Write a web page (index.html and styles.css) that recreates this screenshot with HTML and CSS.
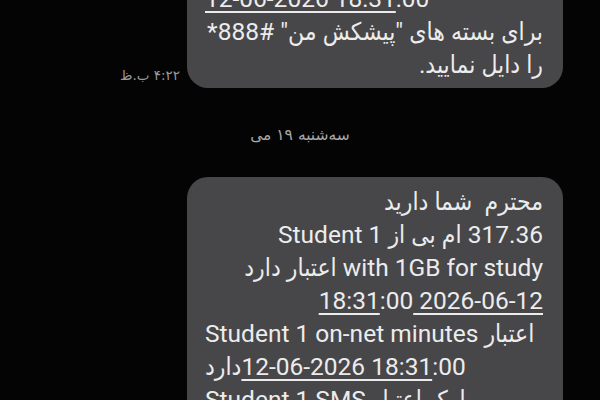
FILE: index.html
```html
<!DOCTYPE html>
<html lang="fa">
<head>
<meta charset="utf-8">
<link rel="stylesheet" href="styles.css">
</head>
<body>
<div class="chat">
  <div class="row">
    <span class="time" dir="rtl">۴:۲۲ ب.ظ</span>
    <div class="bubble first">
      <div class="line ltr"><span class="link">12-06-2026 18:31</span>:00</div>
      <div class="line rtl" dir="rtl">برای بسته های "پیشکش من" #888*</div>
      <div class="line rtl" dir="rtl">را دایل نمایید.</div>
    </div>
  </div>
  <div class="date" dir="rtl">سه‌شنبه ۱۹ می</div>
  <div class="row">
    <div class="bubble second">
      <div class="line rtl" dir="rtl">محترم&nbsp; شما دارید</div>
      <div class="line rtl" dir="rtl">317.36 ام بی از Student 1</div>
      <div class="line rtl" dir="rtl">with 1GB for study اعتبار دارد</div>
      <div class="line ltr end"><span class="link">18:31</span>:00<span class="link"> 2026-06-12</span></div>
      <div class="line ltr">Student 1 on-net minutes <bdi dir="rtl">اعتبار</bdi></div>
      <div class="line ltr"><bdi dir="rtl">دارد</bdi><span class="link">12-06-2026 18:31</span>:00</div>
      <div class="line ltr">Student 1 SMS <bdi dir="rtl">پیامک اعتبار</bdi></div>
    </div>
  </div>
</div>
</body>
</html>
```

FILE: styles.css
```css
html, body {
  margin: 0;
  padding: 0;
  background: #040404;
  width: 600px;
  height: 400px;
  overflow: hidden;
}

.chat {
  display: flex;
  flex-direction: column;
  font-family: Roboto, "DejaVu Sans Condensed", "DejaVu Sans", sans-serif;
  color: #ececec;
}

.row {
  display: flex;
  justify-content: flex-end;
  align-items: flex-end;
  padding-right: 37px;
}

.row:first-child {
  margin-top: -26px;
}

.bubble {
  width: 376px;
  box-sizing: border-box;
  background: #474649;
  border-radius: 21px;
  padding: 8px 20px 7px 18px;
  font-size: 24.5px;
  line-height: 33px;
}

.second {
  margin-top: 32px;
  padding-bottom: 40px;
}

.line {
  white-space: nowrap;
  height: 33px;
}

.ltr {
  direction: ltr;
  text-align: left;
}

.rtl {
  direction: rtl;
  text-align: right;
}

.end {
  text-align: right;
}

.link {
  text-decoration: underline;
  text-decoration-thickness: 2px;
  text-underline-offset: 4px;
}

.time {
  font-family: "DejaVu Sans", sans-serif;
  font-size: 13.5px;
  line-height: 16px;
  color: #9a9a9c;
  margin-right: 7px;
  margin-bottom: 5px;
}

.date {
  font-family: "DejaVu Sans", sans-serif;
  margin-top: 37px;
  height: 20px;
  line-height: 20px;
  text-align: center;
  font-size: 15.5px;
  color: #a8a8aa;
}
```
